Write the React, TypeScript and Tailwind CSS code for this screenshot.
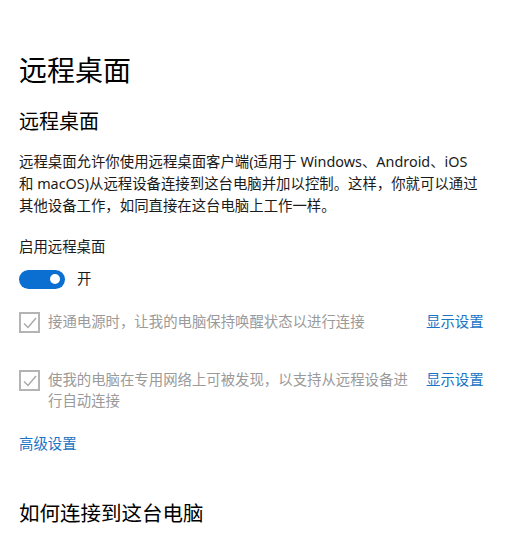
import React from "react";

const font = { fontFamily: '"Noto Sans", "Noto Sans CJK SC", sans-serif' };

function Check() {
  return (
    <div className="w-[21px] h-[21px] border-2 border-[#b4b4b4] flex items-center justify-center shrink-0 mt-[1px]">
      <svg width="14" height="12" viewBox="0 0 14 12" fill="none">
        <path d="M1 6.5 L5 10.5 L13 1" stroke="#a8a8a8" strokeWidth="1.4" />
      </svg>
    </div>
  );
}

export default function App() {
  return (
    <div className="w-[522px] h-[535px] bg-white overflow-hidden pl-[19px] pt-[52px]" style={font}>
      <div className="text-[28px] leading-[36px] text-black">远程桌面</div>
      <div className="mt-[20px] text-[20px] leading-[28px] text-black">远程桌面</div>
      <div className="mt-[15px] text-[14.4px] leading-[22px] text-[#1a1a1a]">
        <div>远程桌面允许你使用远程桌面客户端(适用于 Windows、Android、iOS</div>
        <div>和 macOS)从远程设备连接到这台电脑并加以控制。这样，你就可以通过</div>
        <div>其他设备工作，如同直接在这台电脑上工作一样。</div>
      </div>
      <div className="mt-[19px] text-[14.4px] leading-[22px] text-[#1a1a1a]">启用远程桌面</div>
      <div className="mt-[11px] flex items-center gap-[12px]">
        <div className="w-[46px] h-[19px] rounded-full bg-[#0a6fd1] flex items-center justify-end pr-[5px]">
          <div className="w-[10px] h-[10px] rounded-full bg-white" />
        </div>
        <span className="text-[14.4px] leading-[20px] text-[#1a1a1a]">开</span>
      </div>
      <div className="mt-[22px] flex items-start">
        <Check />
        <div className="ml-[8px] w-[378px] text-[14.4px] leading-[22px] text-[#9a9a9a]">接通电源时，让我的电脑保持唤醒状态以进行连接</div>
        <div className="text-[14.4px] leading-[22px] text-[#1a73c4]">显示设置</div>
      </div>
      <div className="mt-[36px] flex items-start">
        <Check />
        <div className="ml-[8px] w-[378px] text-[14.4px] leading-[21px] text-[#9a9a9a]">
          <div>使我的电脑在专用网络上可被发现，以支持从远程设备进</div>
          <div>行自动连接</div>
        </div>
        <div className="text-[14.4px] leading-[22px] text-[#1a73c4]">显示设置</div>
      </div>
      <div className="mt-[22px] text-[14.4px] leading-[22px] text-[#1a73c4]">高级设置</div>
      <div className="mt-[44px] text-[20.5px] leading-[28px] text-black">如何连接到这台电脑</div>
    </div>
  );
}
